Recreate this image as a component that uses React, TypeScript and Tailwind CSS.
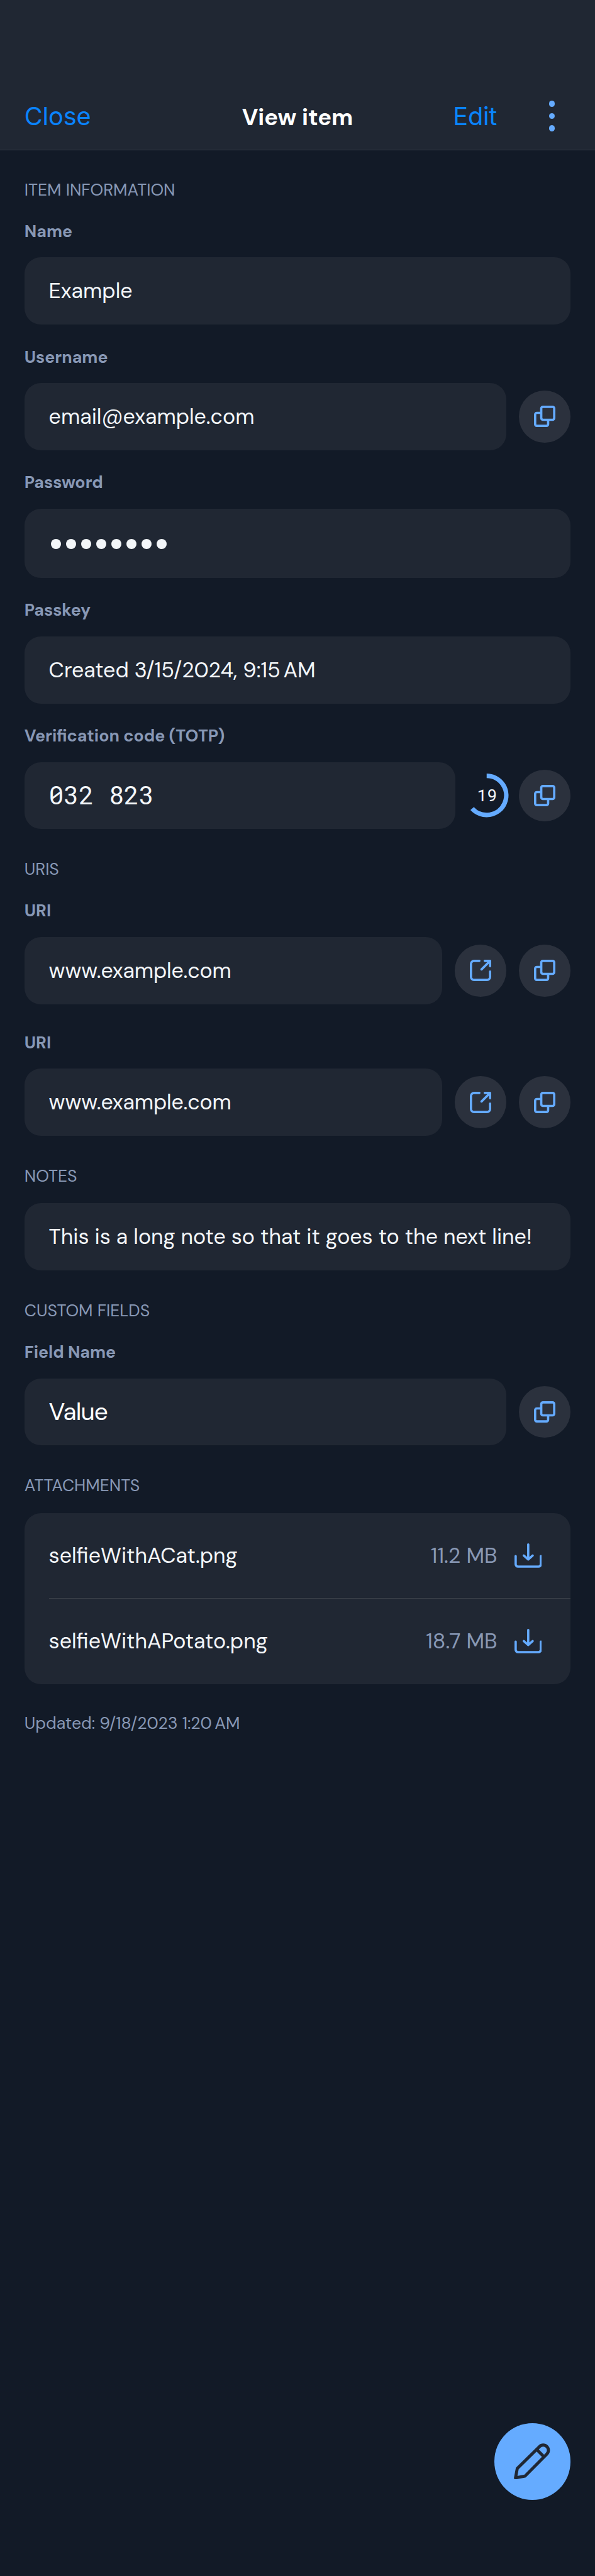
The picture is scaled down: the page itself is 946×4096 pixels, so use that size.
import type { ReactNode } from "react";

const CopyIcon = () => (
  <svg viewBox="0 0 42 42" className="size-[34px]" fill="none" stroke="#65abff" strokeWidth="4.5">
    <rect x="14.25" y="2.25" width="25.5" height="25.5" rx="3.2" />
    <path d="M14 14.25H5.45a3.2 3.2 0 0 0-3.2 3.2V36.55a3.2 3.2 0 0 0 3.2 3.2H24.55a3.2 3.2 0 0 0 3.2-3.2V28" />
  </svg>
);

const LaunchIcon = () => (
  <svg viewBox="0 0 42 42" className="size-[34px]" fill="none" stroke="#65abff" strokeWidth="4.5" strokeLinecap="round" strokeLinejoin="round">
    <path d="M18.75 2.25H8.25a6 6 0 0 0-6 6V33.75a6 6 0 0 0 6 6H33.75a6 6 0 0 0 6-6V23.25" />
    <path d="M29.25 2.25H39.75V12.75M39 3L23 19" />
  </svg>
);

const DownloadIcon = () => (
  <svg viewBox="0 0 54 48" className="h-[38.8px] w-[43.7px]" fill="none" stroke="#65abff" strokeWidth="4.5" strokeLinecap="round" strokeLinejoin="round">
    <path d="M2.25 25V41.25a4.5 4.5 0 0 0 4.5 4.5H47.25a4.5 4.5 0 0 0 4.5-4.5V25" />
    <path d="M27 2.25V31.75M18.25 24L27 31.75L35.75 24" />
  </svg>
);

const PencilIcon = () => (
  <svg viewBox="0 0 71 71" className="size-[57.4px]" fill="none" stroke="#202733" strokeWidth="6" strokeLinejoin="round">
    <path d="M50.4 6.4L6.7 49.5L3.2 68L22 64.5L65 21A10.3 10.3 0 0 0 50.4 6.4Z" />
    <path d="M44.5 11.8L59.4 26.7" />
  </svg>
);

const IconButton = ({ children }: { children: ReactNode }) => (
  <button className="flex size-[82.5px] shrink-0 items-center justify-center rounded-full bg-[#2b313d]">{children}</button>
);

const CopyButton = () => (
  <IconButton>
    <CopyIcon />
  </IconButton>
);

const LaunchButton = () => (
  <IconButton>
    <LaunchIcon />
  </IconButton>
);

const Countdown = () => (
  <div className="relative flex h-[69.5px] w-[62.3px] shrink-0 items-center justify-center">
    <svg viewBox="0 0 86 86" className="absolute -left-[3.6px] size-[69.5px] max-w-none" fill="none" stroke="#65abff" strokeWidth="9">
      <path d="M43 4.5A38.5 38.5 0 1 1 14.39 68.76" />
    </svg>
    <span className="pb-[2px] font-['Roboto_Mono','DejaVu_Sans_Mono',monospace] text-[26.7px]">19</span>
  </div>
);

const FieldLabel = ({ children }: { children: ReactNode }) => (
  <div className="mb-[24.5px] text-[26.7px] leading-[34px] font-bold text-[#8898b5]">{children}</div>
);

const Field = ({ label, children, actions }: { label?: string; children: ReactNode; actions?: ReactNode }) => (
  <div>
    {label && <FieldLabel>{label}</FieldLabel>}
    <div className="flex items-center gap-[19.4px]">
      <div className="flex h-[106.7px] flex-1 items-center rounded-[26px] bg-[#202733] px-[38.8px] text-[34px] whitespace-nowrap">{children}</div>
      {actions}
    </div>
  </div>
);

const SectionTitle = ({ children }: { children: ReactNode }) => (
  <h2 className="text-[26.7px] leading-[34px] text-[#8898b5]">{children}</h2>
);

const Attachment = ({ name, size }: { name: string; size: string }) => (
  <div className="flex h-[135.9px] items-center pr-[46px] text-[34px]">
    <span className="flex-1">{name}</span>
    <span className="mr-[27px] text-[#8898b5]">{size}</span>
    <DownloadIcon />
  </div>
);

export default function App() {
  return (
    <div className="relative h-[4096px] w-[946px] bg-[#121a27] font-['DM_Sans','Inter',sans-serif] text-[#f3f6f9]">
      <header className="flex h-[238.5px] items-end border-b border-[#333a45] bg-[#202733]">
        <div className="grid h-[106px] w-full grid-cols-[1fr_auto_1fr] items-center pr-[63.7px] pl-[38.8px]">
          <button className="justify-self-start pt-[3px] font-['Inter',sans-serif] text-[39.7px] tracking-[-0.17px] text-[#0a84ff]">Close</button>
          <h1 className="pt-[6px] pl-[24.9px] text-[36.4px] font-bold text-white">View item</h1>
          <div className="flex items-center justify-self-end gap-[82.5px]">
            <button className="pt-[3px] font-['Inter',sans-serif] text-[39.7px] tracking-[-0.22px] text-[#0a84ff]">Edit</button>
            <div className="flex flex-col gap-[9.7px]">
              <i className="size-[9.7px] rounded-full bg-[#65abff]" />
              <i className="size-[9.7px] rounded-full bg-[#65abff]" />
              <i className="size-[9.7px] rounded-full bg-[#65abff]" />
            </div>
          </div>
        </div>
      </header>

      <main className="flex flex-col gap-[46.7px] px-[38.8px] pt-[46px]">
        <section>
          <SectionTitle>ITEM INFORMATION</SectionTitle>
          <div className="mt-[32.3px] flex flex-col gap-[34.6px]">
            <Field label="Name">Example</Field>
            <Field label="Username" actions={<CopyButton />}>email@example.com</Field>
            <div>
              <FieldLabel>Password</FieldLabel>
              <div className="flex h-[110px] items-center gap-[7.75px] rounded-[26px] bg-[#202733] pt-[3px] pl-[42.2px]">
                {[0, 1, 2, 3, 4, 5, 6, 7].map((dot) => (
                  <i key={dot} className="size-[16.2px] rounded-full bg-[#f3f6f9]" />
                ))}
              </div>
            </div>
            <Field label="Passkey">
              <span>Created 3/15/2024, 9:15<span className="[word-spacing:-4.5px]"> AM</span></span>
            </Field>
            <Field label="Verification code (TOTP)" actions={<><Countdown /><CopyButton /></>}>
              <span className="pb-[2px] font-['Roboto_Mono','DejaVu_Sans_Mono',monospace] text-[39.8px]">032 823</span>
            </Field>
          </div>
        </section>

        <section>
          <SectionTitle>URIS</SectionTitle>
          <div className="mt-[32.3px] flex flex-col gap-[44.2px]">
            <Field label="URI" actions={<><LaunchButton /><CopyButton /></>}>
              <span className="tracking-[-0.15px]">www.example.com</span>
            </Field>
            <Field label="URI" actions={<><LaunchButton /><CopyButton /></>}>
              <span className="tracking-[-0.15px]">www.example.com</span>
            </Field>
          </div>
        </section>

        <section>
          <SectionTitle>NOTES</SectionTitle>
          <div className="mt-[26.8px]">
            <Field>This is a long note so that it goes to the next line!</Field>
          </div>
        </section>

        <section>
          <SectionTitle>CUSTOM FIELDS</SectionTitle>
          <div className="mt-[32.3px]">
            <Field label="Field Name" actions={<CopyButton />}>
              <span className="text-[38.8px] tracking-[-0.9px] text-white">Value</span>
            </Field>
          </div>
        </section>

        <section>
          <SectionTitle>ATTACHMENTS</SectionTitle>
          <div className="mt-[26.8px] rounded-[26px] bg-[#202733] pl-[38.8px]">
            <Attachment name="selfieWithACat.png" size="11.2 MB" />
            <div className="-mt-px h-px bg-[#3b4049]" />
            <Attachment name="selfieWithAPotato.png" size="18.7 MB" />
          </div>
          <p className="mt-[45.1px] text-[26.7px] leading-[34px] text-[#8898b5]">
            Updated: 9/18/2023 1:20<span className="[word-spacing:-2.5px]"> AM</span>
          </p>
        </section>
      </main>

      <button className="absolute right-[38.8px] bottom-[121.3px] flex size-[121.3px] items-center justify-center rounded-full bg-[#65abff] pr-[1px] pb-[1.5px]">
        <PencilIcon />
      </button>
    </div>
  );
}
